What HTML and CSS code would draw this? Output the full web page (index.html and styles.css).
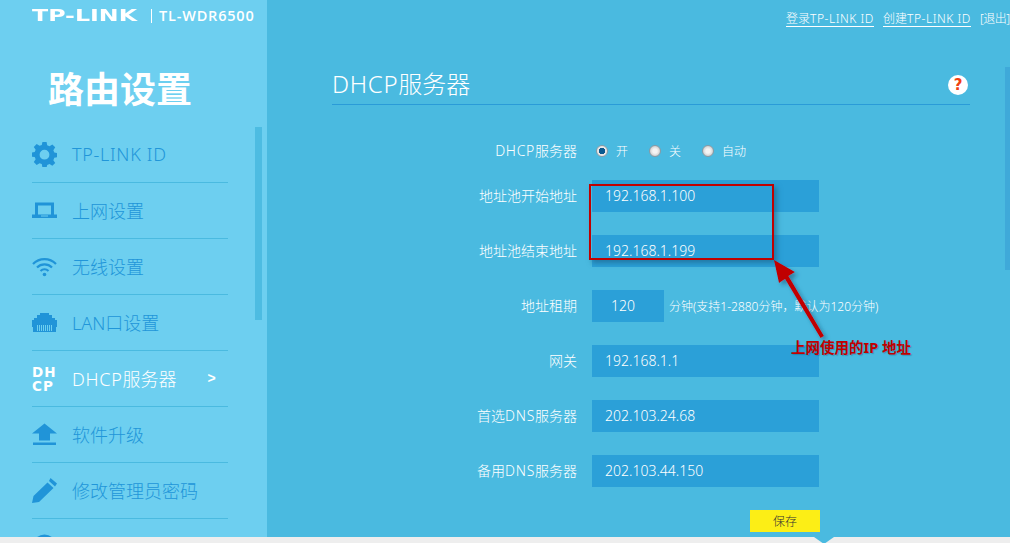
FILE: index.html
```html
<!DOCTYPE html>
<html lang="zh-CN">
<head>
  <meta charset="UTF-8">
  <title>DHCP服务器</title>
  <link rel="stylesheet" href="styles.css">
</head>
<body>

  <div class="page">
    <div class="sidebar">
      <div class="brand">
        <span class="logo">TP-LINK</span>
        <span class="model">TL-WDR6500</span>
      </div>
      <div class="side-title">路由设置</div>

      <div class="side-body">
        <div class="menu">
          <div class="menu-item">
            <svg class="icon" viewBox="0 0 24 24"><path fill-rule="evenodd" d="M10 0h4l.6 3.2 2.2.9L19.500 2.300l2.800 2.800-1.800 2.700.9 2.200 3.200.6v4l-3.200.6-.9 2.200 1.800 2.700-2.800 2.800-2.700-1.800-2.200.9L14 24.500h-4l-.6-3.300-2.200-.9-2.700 1.800-2.800-2.800 1.800-2.700-.9-2.200L-.6 14.200v-4l3.200-.6.9-2.200-1.800-2.700 2.800-2.800 2.700 1.800 2.200-.9zM12 7.500a4.700 4.700 0 1 0 0 9.400 4.700 4.700 0 0 0 0-9.400z"/></svg>
            <span class="en">TP-LINK ID</span>
          </div>
          <div class="menu-item">
            <svg class="icon" viewBox="0 0 25 16"><path fill-rule="evenodd" d="M3 0h19v12h3v3.500H0V12h3zM6 3v9h13V3zM9 13v1h7v-1z"/></svg>
            <span>上网设置</span>
          </div>
          <div class="menu-item">
            <svg class="icon" viewBox="0 0 25 20"><path d="M1 7.500a16 16 0 0 1 23 0" class="arc"/><path d="M5 11a10.500 10.500 0 0 1 15 0" class="arc"/><path d="M8.500 14.500a6 6 0 0 1 8 0" class="arc"/><circle cx="12.500" cy="18" r="1.800"/></svg>
            <span>无线设置</span>
          </div>
          <div class="menu-item">
            <svg class="icon" viewBox="0 0 25 19"><path fill-rule="evenodd" d="M8 0h9v2h3v3h3v2h2v7h-1v5H1v-5H0V7h2V5h3V2h3zM5 12v6h1v-6zM7 12v6h1v-6zM9 12v6h1v-6zM11 12v6h1v-6zM13 12v6h1v-6zM15 12v6h1v-6zM17 12v6h1v-6zM19 12v6h1v-6z"/></svg>
            <span>LAN口设置</span>
          </div>
          <div class="menu-item active">
            <div class="dhcp-icon">DH<br>CP</div>
            <span><span class="en">DHCP</span>服务器</span>
            <span class="arrow">&gt;</span>
          </div>
          <div class="menu-item">
            <svg class="icon" viewBox="0 0 25 22"><path d="M12.500 0 25 10h-7v7H7v-7H0zM1 19h23v2.500H1z"/></svg>
            <span>软件升级</span>
          </div>
          <div class="menu-item">
            <svg class="icon" viewBox="0 0 25 25"><path d="M18.500 0 25 5.500l-2 3-6-5.500zM15.500 4.500l6 5.500L7 24 0 25l1.500-7z"/></svg>
            <span>修改管理员密码</span>
          </div>
          <div class="menu-item">
            <svg class="icon" viewBox="0 0 25 25"><circle cx="12.500" cy="12.500" r="12"/></svg>
          </div>
        </div>
        <div class="side-scroll"></div>
      </div>
    </div>

    <div class="main">
      <div class="top-links">
        <a href="#">登录<span class="en">TP-LINK ID</span></a>
        <a href="#">创建<span class="en">TP-LINK ID</span></a>
        <span class="logout">[退出]</span>
      </div>

      <div class="heading">
        <h1><span class="en">DHCP</span>服务器</h1>
        <div class="help">?</div>
      </div>

      <div class="form">
        <div class="row radio-row">
          <label><span class="en">DHCP</span>服务器</label>
          <div class="radios">
            <span class="radio on"></span><span class="radio-text">开</span>
            <span class="radio"></span><span class="radio-text">关</span>
            <span class="radio"></span><span class="radio-text">自动</span>
          </div>
        </div>
        <div class="row">
          <label>地址池开始地址</label>
          <div class="field">192.168.1.100</div>
        </div>
        <div class="row">
          <label>地址池结束地址</label>
          <div class="field">192.168.1.199</div>
        </div>
        <div class="row">
          <label>地址租期</label>
          <div class="field short">120</div>
          <span class="hint">分钟(支持1-2880分钟，默认为120分钟)</span>
        </div>
        <div class="row">
          <label>网关</label>
          <div class="field">192.168.1.1</div>
        </div>
        <div class="row">
          <label>首选<span class="en">DNS</span>服务器</label>
          <div class="field">202.103.24.68</div>
        </div>
        <div class="row">
          <label>备用<span class="en">DNS</span>服务器</label>
          <div class="field">202.103.44.150</div>
        </div>
        <div class="save-row">
          <div class="save">保存</div>
        </div>
      </div>

      <div class="main-scroll"></div>

      <!-- annotation drawn over the screenshot -->
      <div class="mark-box"></div>
      <svg class="mark-arrow" viewBox="0 0 70 90">
        <defs>
          <filter id="soft" x="-30%" y="-30%" width="160%" height="160%">
            <feDropShadow dx="3" dy="3" stdDeviation="2" flood-color="#1c5f80" flood-opacity="0.6"/>
          </filter>
        </defs>
        <path filter="url(#soft)" d="M1 0 22 12 15.500 16 51 76 47.500 78 12 19 6 23z" fill="#c00000"/>
      </svg>
      <div class="mark-text">上网使用的IP 地址</div>
    </div>
  </div>

  <div class="bottom-strip"><span class="notch"></span></div>

</body>
</html>
```

FILE: styles.css
```css
* {
  box-sizing: border-box;
}

html, body {
  margin: 0;
  height: 543px;
  overflow: hidden;
}

body {
  font-family: "Noto Sans", "Noto Sans CJK SC", sans-serif;
  background: #eeeeee;
  color: white;
}

.page {
  display: flex;
  height: 537px;
}

.en {
  letter-spacing: 0.7px;
}

/* sidebar */
.sidebar {
  width: 267px;
  background-color: #6dcff0;
  overflow: hidden;
}

.brand {
  display: flex;
  align-items: center;
  height: 31px;
  padding-left: 32px;
}

.logo {
  font-family: "DejaVu Sans", sans-serif;
  font-size: 16px;
  font-weight: bold;
  transform: scaleX(1.48);
  transform-origin: left;
  width: 119px;
  line-height: 12px;
}

.model {
  border-left: 1px solid white;
  padding-left: 7px;
  font-family: "Open Sans", sans-serif;
  font-size: 14.500px;
  font-weight: 600;
  letter-spacing: 0.8px;
  line-height: 14px;
}

.side-title {
  height: 96px;
  padding: 37px 0 0 48px;
  font-size: 36px;
  line-height: 44px;
  font-weight: bold;
}

.side-body {
  display: flex;
}

.menu {
  width: 196px;
  margin-left: 32px;
}

.menu-item {
  display: flex;
  align-items: center;
  height: 56px;
  border-bottom: 1px solid #4abae0;
  color: #2196d9;
  font-size: 18px;
  font-weight: 300;
}

.menu-item > span {
  margin-bottom: 2px;
}

.icon {
  width: 25px;
  height: 25px;
  margin-right: 15px;
  flex: none;
  fill: #2094d8;
}

.arc {
  fill: none;
  stroke: #2094d8;
  stroke-width: 2.200;
}

.menu-item.active {
  color: white;
}

.dhcp-icon {
  width: 25px;
  margin-right: 15px;
  flex: none;
  font-family: "DejaVu Sans", sans-serif;
  font-size: 13.500px;
  font-weight: bold;
  line-height: 14px;
  letter-spacing: 1px;
}

.arrow {
  margin-left: 31px;
  font-size: 14px;
  font-weight: bold;
  font-family: "Liberation Sans", sans-serif;
}

.side-scroll {
  width: 7px;
  height: 193px;
  margin-left: 27px;
  background-color: #4dbce2;
}

/* main area */
.main {
  position: relative;
  flex: 1;
  background-color: #4abae0;
  overflow: hidden;
}

.top-links {
  display: flex;
  gap: 9px;
  padding: 11px 0 0 519px;
  font-size: 12px;
  line-height: 16px;
  white-space: nowrap;
  font-weight: 300;
}

.top-links .en {
  letter-spacing: 0.55px;
}

.top-links a {
  color: white;
  text-decoration: none;
  border-bottom: 1px solid white;
  height: 15.500px;
}

.logout {
  letter-spacing: -0.5px;
}

.heading {
  display: flex;
  justify-content: space-between;
  align-items: center;
  width: 638px;
  height: 39px;
  margin: 39px 0 0 65px;
  border-bottom: 1px solid #2a9bd8;
  padding-right: 2px;
}

.heading h1 {
  margin: 0 0 2px;
  font-size: 24px;
  font-weight: 300;
  line-height: 30px;
}

.help {
  width: 20px;
  height: 20px;
  border-radius: 50%;
  background: white;
  color: #f04010;
  font-family: "DejaVu Sans", sans-serif;
  font-weight: bold;
  font-size: 15px;
  line-height: 20px;
  text-align: center;
}

.form {
  padding-top: 30px;
  font-weight: 300;
}

.row {
  display: flex;
  align-items: center;
  height: 32px;
  margin-bottom: 23px;
  font-size: 14px;
}

.radio-row {
  margin-bottom: 13px;
}

.row label {
  width: 310px;
  margin-bottom: 2px;
  text-align: right;
  flex: none;
  white-space: nowrap;
}

.field {
  width: 227px;
  height: 32px;
  margin-left: 15px;
  padding-left: 13px;
  background-color: #2ba0d8;
  font-size: 14px;
  line-height: 31px;
}

.field.short {
  width: 72px;
  padding-left: 19px;
}

.hint {
  margin-left: 5px;
  font-size: 12px;
  white-space: nowrap;
}

.radios {
  display: flex;
  align-items: center;
  margin-left: 19px;
  font-size: 12px;
}

.radio {
  width: 12px;
  height: 12px;
  border-radius: 50%;
  background: radial-gradient(circle at 50% 50%, #f4f4f4 30%, #b8b8b8 100%);
  border: 1px solid #8a9aa4;
}

.radio.on {
  background: radial-gradient(circle at 50% 50%, #0a5a90 30%, #0a5a90 42%, #e8e8e8 50%);
}

.radio-text {
  margin: 0 21px 0 8px;
}

.radio-text:last-child {
  margin-right: 0;
}

.save-row {
  padding: 0 0 0 483px;
  margin-top: 5px;
}

.save {
  width: 70px;
  height: 22px;
  background-color: #fcee16;
  color: #333333;
  font-size: 12px;
  line-height: 23px;
  text-align: center;
}

.main-scroll {
  position: absolute;
  top: 67px;
  right: 0;
  width: 5px;
  height: 203px;
  background-color: #3fa9d9;
}

/* red annotation */
.mark-box {
  position: absolute;
  left: 322px;
  top: 184px;
  width: 185px;
  height: 76px;
  border: 2px solid #c00000;
  box-shadow: 3px 3px 5px rgba(28, 95, 128, 0.6);
}

.mark-arrow {
  position: absolute;
  left: 506px;
  top: 260px;
  width: 70px;
  height: 90px;
}

.mark-text {
  position: absolute;
  left: 524px;
  top: 338px;
  color: #c00000;
  font-size: 14.500px;
  line-height: 19px;
  font-weight: bold;
  white-space: nowrap;
  text-shadow: 1px 1px 1px rgba(28, 95, 128, 0.4);
}

/* strip at the very bottom of the window */
.bottom-strip {
  position: relative;
  height: 6px;
}

.notch {
  position: absolute;
  left: 814px;
  top: 0;
  border-left: 10px solid transparent;
  border-right: 10px solid transparent;
  border-top: 7px solid #4abae0;
}
```
